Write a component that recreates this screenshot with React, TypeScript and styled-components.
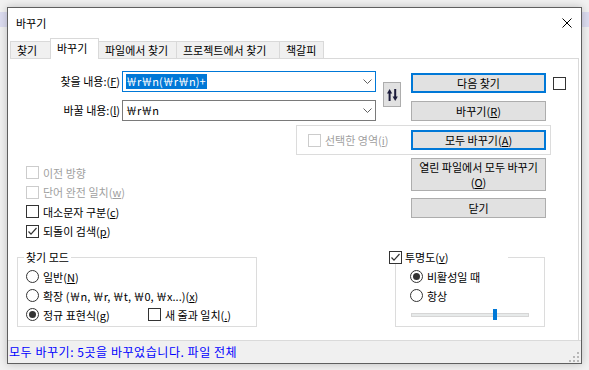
import React from "react";
import styled, { createGlobalStyle } from "styled-components";

const GlobalStyle = createGlobalStyle`
  html, body {
    margin: 0;
    padding: 0;
  }
  body {
    width: 589px;
    height: 370px;
    overflow: hidden;
    background: linear-gradient(to bottom, #f1f1f1 0, #f1f1f1 12px, #dcdcf0 12px, #dcdcf0 27px, #f1f1f1 27px);
    font-family: "Noto Sans CJK KR", "Noto Sans", sans-serif;
    font-size: 11px;
    line-height: 14px;
    color: #000;
  }
`;

const Dialog = styled.div`
  margin: 7px 0 0 7px;
  width: 575px;
  height: 357px;
  box-sizing: border-box;
  border: 1px solid #5f5f5f;
  background: #fff;
  display: flex;
  flex-direction: column;
  box-shadow: 0 0 8px rgba(0, 0, 0, 0.22);
`;

const TitleBar = styled.div`
  height: 30px;
  display: flex;
  align-items: center;
  padding-left: 8px;
  font-size: 11px;
`;

const CloseIcon = styled.svg`
  margin-left: auto;
  margin-right: 9px;
`;

const TabStrip = styled.div`
  height: 20px;
  display: flex;
  align-items: flex-end;
  padding-left: 2px;
`;

const Tab = styled.div<{ $active?: boolean; $w: number }>`
  box-sizing: border-box;
  width: ${(p) => p.$w}px;
  height: ${(p) => (p.$active ? 21 : 17)}px;
  margin-bottom: ${(p) => (p.$active ? -1 : 0)}px;
  margin-left: -1px;
  padding: 0 0 ${(p) => (p.$active ? 3 : 0)}px 6px;
  border: 1px solid #d9d9d9;
  border-bottom: none;
  background: ${(p) => (p.$active ? "#fff" : "#f0f0f0")};
  display: flex;
  align-items: center;
  white-space: nowrap;
  position: relative;
  z-index: ${(p) => (p.$active ? 1 : 0)};
  &:first-child {
    margin-left: 0;
  }
`;

const Panel = styled.div`
  flex: 1;
  margin: 0 2px;
  border-top: 1px solid #d9d9d9;
  border-right: 1px solid #d9d9d9;
  padding-top: 12px;
  display: flex;
  flex-direction: column;
`;

const TopGrid = styled.div`
  display: grid;
  grid-template-columns: 112px 254px 25px 145px 20px;
  grid-template-rows: 29px 21px;
`;

const FieldLabel = styled.div`
  height: 21px;
  line-height: 21px;
  text-align: right;
  padding-right: 2px;
  white-space: nowrap;
`;

const Combo = styled.div<{ $focused?: boolean }>`
  box-sizing: border-box;
  height: 21px;
  border: 1px solid ${(p) => (p.$focused ? "#0078d7" : "#7a7a7a")};
  background: #fff;
  display: flex;
  align-items: center;
  padding: 0 3px 0 3px;
`;

const ComboText = styled.span<{ $selected?: boolean }>`
  line-height: 15px;
  padding-right: 1px;
  background: ${(p) => (p.$selected ? "#0078d7" : "transparent")};
  color: ${(p) => (p.$selected ? "#fff" : "#000")};
`;

const Chevron = styled.svg`
  margin-left: auto;
`;

const SwapButton = styled.div`
  grid-column: 3;
  grid-row: 1 / 3;
  justify-self: end;
  align-self: start;
  margin-top: 11px;
  box-sizing: border-box;
  width: 18px;
  height: 25px;
  border: 1px solid #adadad;
  background: #e1e1e1;
  display: flex;
  align-items: center;
  justify-content: center;
`;

const Button = styled.div<{ $default?: boolean; $tall?: boolean }>`
  box-sizing: border-box;
  width: 135px;
  height: ${(p) => (p.$tall ? 33 : 20)}px;
  border: ${(p) => (p.$default ? "2px solid #0078d7" : "1px solid #adadad")};
  background: #e1e1e1;
  display: flex;
  flex-direction: column;
  align-items: center;
  justify-content: center;
  text-align: center;
  line-height: 15px;
  white-space: nowrap;
`;

const GridButton = styled(Button)<{ $row: number; $top: number }>`
  grid-column: 4;
  grid-row: ${(p) => p.$row};
  justify-self: end;
  align-self: start;
  margin-top: ${(p) => p.$top}px;
`;

const Box = styled.span<{ $disabled?: boolean }>`
  box-sizing: border-box;
  width: 13px;
  height: 13px;
  flex-shrink: 0;
  border: 1px solid ${(p) => (p.$disabled ? "#cccccc" : "#333333")};
  background: #fff;
  display: inline-flex;
  align-items: center;
  justify-content: center;
`;

const GridBox = styled(Box)`
  grid-column: 5;
  grid-row: 1;
  justify-self: end;
  align-self: start;
  margin-top: 6px;
`;

const Circle = styled.span`
  box-sizing: border-box;
  width: 13px;
  height: 13px;
  flex-shrink: 0;
  border: 1px solid #333333;
  border-radius: 50%;
  background: #fff;
  display: inline-flex;
  align-items: center;
  justify-content: center;
`;

const Dot = styled.span`
  width: 7px;
  height: 7px;
  border-radius: 50%;
  background: #333333;
`;

const Option = styled.div<{ $disabled?: boolean; $h?: number; $w?: number }>`
  height: ${(p) => p.$h ?? 19}px;
  ${(p) => (p.$w ? `width: ${p.$w}px;` : "")}
  display: flex;
  align-items: center;
  gap: 4px;
  white-space: nowrap;
  color: ${(p) => (p.$disabled ? "#a0a0a0" : "#000")};
`;

const SelectionGroup = styled.div`
  box-sizing: border-box;
  margin: 4px 0 0 286px;
  width: 255px;
  height: 30px;
  border: 1px solid #dcdcdc;
  display: flex;
  align-items: center;
  padding: 0 4px 0 11px;
`;

const PushRight = styled(Button)`
  margin-left: auto;
`;

const MiddleRow = styled.div`
  display: grid;
  grid-template-columns: 401px 135px;
`;

const CheckList = styled.div`
  padding: 8px 0 0 16px;
`;

const ButtonColumn = styled.div`
  padding-top: 3px;
  display: flex;
  flex-direction: column;
  gap: 7px;
`;

const BottomRow = styled.div`
  margin-top: 9px;
  display: flex;
  align-items: flex-start;
`;

const Group = styled.fieldset<{ $left: number; $w: number; $pad: number }>`
  box-sizing: border-box;
  margin: 0 0 0 ${(p) => p.$left}px;
  width: ${(p) => p.$w}px;
  min-width: 0;
  border: 1px solid #dcdcdc;
  padding: 3px 0 2px ${(p) => p.$pad}px;
`;

const Legend = styled.legend`
  padding: 0 2px;
  margin-left: -2px;
  line-height: 14px;
`;

const CheckLegend = styled.legend`
  padding: 0;
  margin-left: -21px;
  width: 119px;
  height: 14px;
  background: #fff;
  display: flex;
  align-items: center;
  gap: 3px;
  line-height: 14px;
`;

const Row = styled.div`
  height: 19px;
  display: flex;
  align-items: center;
`;

const Track = styled.div`
  position: relative;
  box-sizing: border-box;
  margin-left: 1px;
  width: 118px;
  height: 4px;
  background: #e7eaea;
  border: 1px solid #d6d6d6;
`;

const Thumb = styled.div<{ $pos: number }>`
  position: absolute;
  left: ${(p) => p.$pos}px;
  top: -5px;
  width: 4px;
  height: 11px;
  background: #0078d7;
`;

const StatusBar = styled.div`
  box-sizing: border-box;
  height: 23px;
  border-top: 1px solid #dadada;
  background: #f0f0f0;
  display: flex;
  align-items: center;
  padding-left: 1px;
`;

const StatusText = styled.span`
  font-size: 12px;
  line-height: 22px;
  color: #0000ff;
  letter-spacing: 0.55px;
`;

const Grip = styled.svg`
  align-self: flex-end;
  margin: 0 2px 1px auto;
`;

const M = styled.u`
  text-underline-offset: 1px;
`;

const Check = () => (
  <svg width="11" height="11" viewBox="0 0 11 11">
    <polyline points="1.5,5.5 4,8.2 9.5,2" fill="none" stroke="#333" strokeWidth="1.2" />
  </svg>
);

const CheckOption = ({
  checked,
  disabled,
  w,
  h,
  children,
}: {
  checked?: boolean;
  disabled?: boolean;
  w?: number;
  h?: number;
  children: React.ReactNode;
}) => (
  <Option $disabled={disabled} $w={w} $h={h}>
    <Box $disabled={disabled}>{checked && <Check />}</Box>
    <span>{children}</span>
  </Option>
);

const RadioOption = ({
  checked,
  w,
  children,
}: {
  checked?: boolean;
  w?: number;
  children: React.ReactNode;
}) => (
  <Option $w={w}>
    <Circle>{checked && <Dot />}</Circle>
    <span>{children}</span>
  </Option>
);

const ChevronDown = () => (
  <Chevron width="9" height="5" viewBox="0 0 9 5">
    <polyline points="0.5,0.5 4.5,4.5 8.5,0.5" fill="none" stroke="#606060" strokeWidth="1" />
  </Chevron>
);

const tabs = [
  { label: "찾기", w: 41 },
  { label: "바꾸기", w: 49, active: true },
  { label: "파일에서 찾기", w: 79 },
  { label: "프로젝트에서 찾기", w: 104 },
  { label: "책갈피", w: 45 },
];

const App = () => {
  return (
    <>
      <GlobalStyle />
      <Dialog>
        <TitleBar>
          <span>바꾸기</span>
          <CloseIcon width="10" height="10" viewBox="0 0 10 10">
            <path d="M0.5 0.5 L9.5 9.5 M9.5 0.5 L0.5 9.5" stroke="#000" strokeWidth="1" />
          </CloseIcon>
        </TitleBar>

        <TabStrip>
          {tabs.map((t) => (
            <Tab key={t.label} $active={t.active} $w={t.w}>
              {t.label}
            </Tab>
          ))}
        </TabStrip>

        <Panel>
          <TopGrid>
            <FieldLabel>
              찾을 내용:(<M>F</M>)
            </FieldLabel>
            <Combo $focused>
              <ComboText $selected>￦r￦n(￦r￦n)+</ComboText>
              <ChevronDown />
            </Combo>
            <SwapButton>
              <svg width="11" height="12" viewBox="0 0 11 12">
                <path d="M2.6 12 V3.5" stroke="#1b1b3a" strokeWidth="2" />
                <polygon points="0,4.5 2.6,0 5.2,4.5" fill="#1b1b3a" />
                <path d="M8.2 0 V8.5" stroke="#1b1b3a" strokeWidth="2" />
                <polygon points="5.6,7.5 8.2,12 10.8,7.5" fill="#1b1b3a" />
              </svg>
            </SwapButton>
            <GridButton $default $row={1} $top={2}>
              다음 찾기
            </GridButton>
            <GridBox />

            <FieldLabel>
              바꿀 내용:(<M>l</M>)
            </FieldLabel>
            <Combo>
              <ComboText>￦r￦n</ComboText>
              <ChevronDown />
            </Combo>
            <GridButton $row={2} $top={1}>
              <span>
                바꾸기(<M>R</M>)
              </span>
            </GridButton>
          </TopGrid>

          <SelectionGroup>
            <CheckOption disabled>
              선택한 영역(<M>i</M>)
            </CheckOption>
            <PushRight $default>
              <span>
                모두 바꾸기(<M>A</M>)
              </span>
            </PushRight>
          </SelectionGroup>

          <MiddleRow>
            <CheckList>
              <CheckOption disabled h={19.5}>
                이전 방향
              </CheckOption>
              <CheckOption disabled h={19.5}>
                단어 완전 일치(<M>w</M>)
              </CheckOption>
              <CheckOption h={19.5}>
                대소문자 구분(<M>c</M>)
              </CheckOption>
              <CheckOption checked h={19.5}>
                되돌이 검색(<M>p</M>)
              </CheckOption>
            </CheckList>
            <ButtonColumn>
              <Button $tall>
                <span>열린 파일에서 모두 바꾸기</span>
                <span>
                  (<M>O</M>)
                </span>
              </Button>
              <Button>닫기</Button>
            </ButtonColumn>
          </MiddleRow>

          <BottomRow>
            <Group $left={7} $w={240} $pad={8}>
              <Legend>찾기 모드</Legend>
              <Row>
                <RadioOption>
                  일반(<M>N</M>)
                </RadioOption>
              </Row>
              <Row>
                <RadioOption>
                  확장 (￦n, ￦r, ￦t, ￦0, ￦x...)(<M>x</M>)
                </RadioOption>
              </Row>
              <Row>
                <RadioOption checked w={122}>
                  정규 표현식(<M>g</M>)
                </RadioOption>
                <CheckOption>
                  새 줄과 일치(<M>.</M>)
                </CheckOption>
              </Row>
            </Group>

            <Group $left={138} $w={150} $pad={14}>
              <CheckLegend>
                <Box>
                  <Check />
                </Box>
                <span>
                  투명도(<M>v</M>)
                </span>
              </CheckLegend>
              <Row>
                <RadioOption checked>비활성일 때</RadioOption>
              </Row>
              <Row>
                <RadioOption>항상</RadioOption>
              </Row>
              <Row>
                <Track>
                  <Thumb $pos={81} />
                </Track>
              </Row>
            </Group>
          </BottomRow>
        </Panel>

        <StatusBar>
          <StatusText>모두 바꾸기: 5곳을 바꾸었습니다. 파일 전체</StatusText>
          <Grip width="10" height="10" viewBox="0 0 10 10">
            <rect x="8" y="0" width="2" height="2" fill="#b8b8b8" />
            <rect x="4" y="4" width="2" height="2" fill="#b8b8b8" />
            <rect x="8" y="4" width="2" height="2" fill="#b8b8b8" />
            <rect x="0" y="8" width="2" height="2" fill="#b8b8b8" />
            <rect x="4" y="8" width="2" height="2" fill="#b8b8b8" />
            <rect x="8" y="8" width="2" height="2" fill="#b8b8b8" />
          </Grip>
        </StatusBar>
      </Dialog>
    </>
  );
};

export default App;
